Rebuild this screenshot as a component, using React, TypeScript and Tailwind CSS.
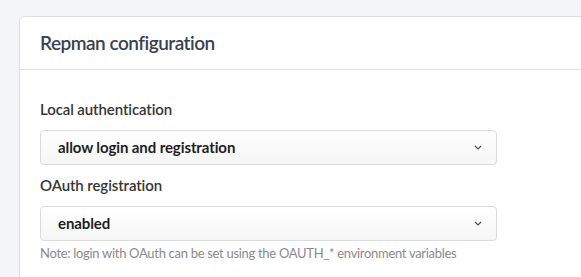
function Chevron() {
  return (
    <svg width="8" height="5" viewBox="0 0 8 5" className="ml-auto">
      <path d="M1 1l3 3 3-3" fill="none" stroke="#4a4f5a" strokeWidth="1.2" />
    </svg>
  );
}

function Select({ value }: { value: string }) {
  return (
    <div className="flex h-[35px] w-[457px] items-center rounded border border-[#dbdbdb] bg-gradient-to-b from-white to-[#f6f6f6] pl-[17px] pr-[14px] text-[15px] font-bold tracking-[-0.1px] text-[#1f1f1f]">
      {value}
      <Chevron />
    </div>
  );
}

export default function App() {
  return (
    <div className="h-[277px] w-[581px] overflow-hidden bg-[#f4f5f9] pl-[19px] pt-4 font-['Lato','Liberation_Sans',sans-serif]">
      <section className="w-[620px] rounded-tl-md border border-[#dedfe3] bg-white">
        <div className="flex h-[53px] items-center border-b border-[#dedfe3] px-5">
          <h2 className="text-[19px] font-semibold tracking-[-0.5px] text-[#3a4150]">Repman configuration</h2>
        </div>
        <div className="px-5 pt-[27px] pb-6">
          <p className="mb-[9px] text-[15px] leading-6 font-semibold tracking-[-0.1px] text-[#363636]">Local authentication</p>
          <Select value="allow login and registration" />
          <p className="mt-2 mb-[9px] text-[15px] leading-6 font-semibold tracking-[-0.1px] text-[#363636]">OAuth registration</p>
          <Select value="enabled" />
          <p className="mt-[2px] text-[13px] leading-5 tracking-[-0.3px] text-[#8a8a8a]">
            Note: login with OAuth can be set using the OAUTH_* environment variables
          </p>
        </div>
      </section>
    </div>
  );
}
